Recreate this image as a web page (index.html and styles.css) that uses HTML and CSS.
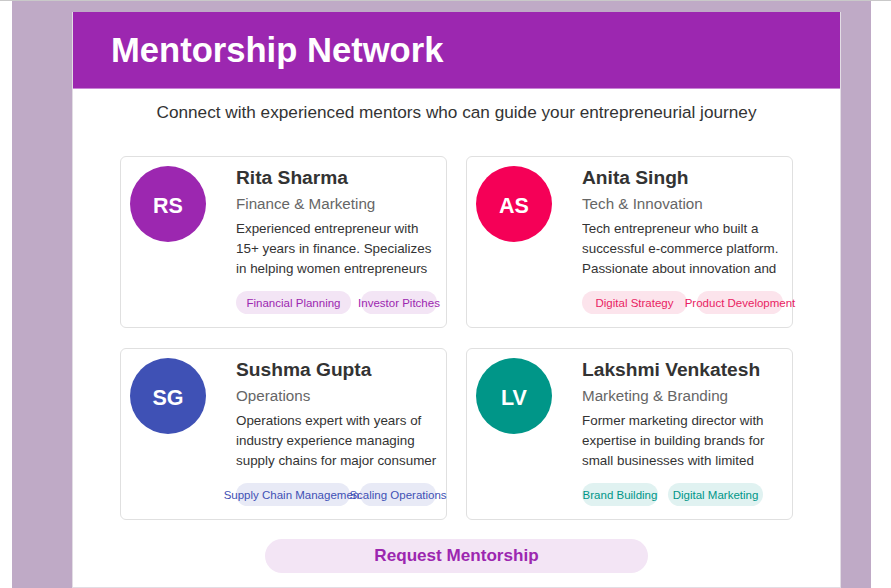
FILE: index.html
```html
<!DOCTYPE html>
<html lang="en">
<head>
<meta charset="utf-8">
<title>Mentorship Network</title>
<link rel="stylesheet" href="styles.css">
</head>
<body>
<div class="page">
  <div class="frame">
    <main class="panel">
      <header class="header">
        <h1 class="title">Mentorship Network</h1>
      </header>
      <p class="intro">Connect with experienced mentors who can guide your entrepreneurial journey</p>
      <section class="grid">
        <article class="card">
          <div class="avatar avatar-purple">RS</div>
          <div class="info">
            <h2 class="name">Rita Sharma</h2>
            <div class="spec">Finance &amp; Marketing</div>
            <p class="desc">Experienced entrepreneur with 15+ years in finance. Specializes in helping women entrepreneurs secure funding and manage growth.</p>
            <div class="tags">
              <span class="tag tag-purple w115">Financial Planning</span>
              <span class="tag tag-purple w76">Investor Pitches</span>
            </div>
          </div>
        </article>
        <article class="card">
          <div class="avatar avatar-pink">AS</div>
          <div class="info">
            <h2 class="name">Anita Singh</h2>
            <div class="spec">Tech &amp; Innovation</div>
            <p class="desc">Tech entrepreneur who built a successful e-commerce platform. Passionate about innovation and mentoring early-stage founders.</p>
            <div class="tags">
              <span class="tag tag-pink w105">Digital Strategy</span>
              <span class="tag tag-pink w85">Product Development</span>
            </div>
          </div>
        </article>
        <article class="card">
          <div class="avatar avatar-indigo">SG</div>
          <div class="info">
            <h2 class="name">Sushma Gupta</h2>
            <div class="spec">Operations</div>
            <p class="desc">Operations expert with years of industry experience managing supply chains for major consumer brands across India.</p>
            <div class="tags">
              <span class="tag tag-indigo w114">Supply Chain Management</span>
              <span class="tag tag-indigo w76">Scaling Operations</span>
            </div>
          </div>
        </article>
        <article class="card">
          <div class="avatar avatar-teal">LV</div>
          <div class="info">
            <h2 class="name">Lakshmi Venkatesh</h2>
            <div class="spec">Marketing &amp; Branding</div>
            <p class="desc">Former marketing director with expertise in building brands for small businesses with limited budgets and big ambitions.</p>
            <div class="tags">
              <span class="tag tag-teal w76">Brand Building</span>
              <span class="tag tag-teal w95">Digital Marketing</span>
            </div>
          </div>
        </article>
      </section>
      <div class="actions">
        <button class="request" type="button">Request Mentorship</button>
      </div>
    </main>
  </div>
</div>
</body>
</html>
```
FILE: styles.css
```css
* { box-sizing: border-box; }

html, body {
  margin: 0;
  padding: 0;
  background: #ffffff;
}

body {
  font-family: "Liberation Sans", Arial, sans-serif;
  color: #333333;
}

.page {
  border-top: 1px solid #c9c9c9;
  padding: 0 20px 0 12px;
}

.frame {
  background: #bfaac6;
  padding: 10px 30px 0 60px;
}

.panel {
  background: #ffffff;
  border: 1px solid #e2dde4;
  border-top: none;
  padding-bottom: 14px;
  margin-top: 1px;
}

.header {
  background: #9c27b0;
  height: 77px;
  border-bottom: 1px solid #c985d6;
  padding: 0 38px;
  display: flex;
  align-items: center;
}

.title {
  margin: 0;
  color: #ffffff;
  font-size: 34.6px;
  line-height: 40px;
  font-weight: 700;
}

.intro {
  margin: 13px 0 0;
  text-align: center;
  font-size: 17.2px;
  line-height: 20px;
  color: #333333;
}

.grid {
  margin: 34px 48px 0 47px;
  display: grid;
  grid-template-columns: 1fr 1fr;
  column-gap: 19px;
  row-gap: 20px;
}

.card {
  border: 1px solid #e0e0e0;
  border-radius: 6px;
  padding: 9px 9px 13px;
  display: flex;
  gap: 30px;
  background: #ffffff;
}

.avatar {
  flex: none;
  width: 76px;
  height: 76px;
  border-radius: 50%;
  color: #ffffff;
  font-weight: 700;
  font-size: 21.5px;
  display: flex;
  align-items: center;
  justify-content: center;
  padding-top: 5px;
}

.avatar-purple { background: #9c27b0; }
.avatar-pink { background: #f50057; }
.avatar-indigo { background: #3f51b5; }
.avatar-teal { background: #009688; }

.info {
  flex: 1;
  min-width: 0;
}

.name {
  margin: 1px 0 0;
  font-size: 19.2px;
  line-height: 22px;
  font-weight: 700;
  color: #333333;
}

.spec {
  margin-top: 6px;
  font-size: 15.2px;
  line-height: 18px;
  color: #666666;
}

.desc {
  margin: 6px 0 0;
  font-size: 13.4px;
  line-height: 20px;
  height: 60px;
  overflow: hidden;
  color: #333333;
}

.tags {
  margin-top: 12px;
  display: flex;
  gap: 10px;
}

.tag {
  flex: none;
  height: 23px;
  border-radius: 12px;
  font-size: 11.5px;
  white-space: nowrap;
  display: flex;
  align-items: center;
  justify-content: center;
}

.tag-purple { background: #f3e5f5; color: #9c27b0; }
.tag-pink { background: #fce4ec; color: #e91e63; }
.tag-indigo { background: #e8eaf6; color: #3f51b5; }
.tag-teal { background: #e0f2f1; color: #009688; }

.w76 { width: 76px; }
.w85 { width: 86px; }
.w95 { width: 95px; }
.w105 { width: 105px; }
.w114 { width: 114px; }
.w115 { width: 115px; }

.actions {
  margin-top: 19px;
  display: flex;
  justify-content: center;
}

.request {
  width: 50%;
  height: 34px;
  border: none;
  border-radius: 17px;
  background: #f3e5f5;
  color: #9c27b0;
  font-family: "Liberation Sans", Arial, sans-serif;
  font-size: 17.1px;
  font-weight: 700;
  padding: 0;
  cursor: pointer;
}
```
